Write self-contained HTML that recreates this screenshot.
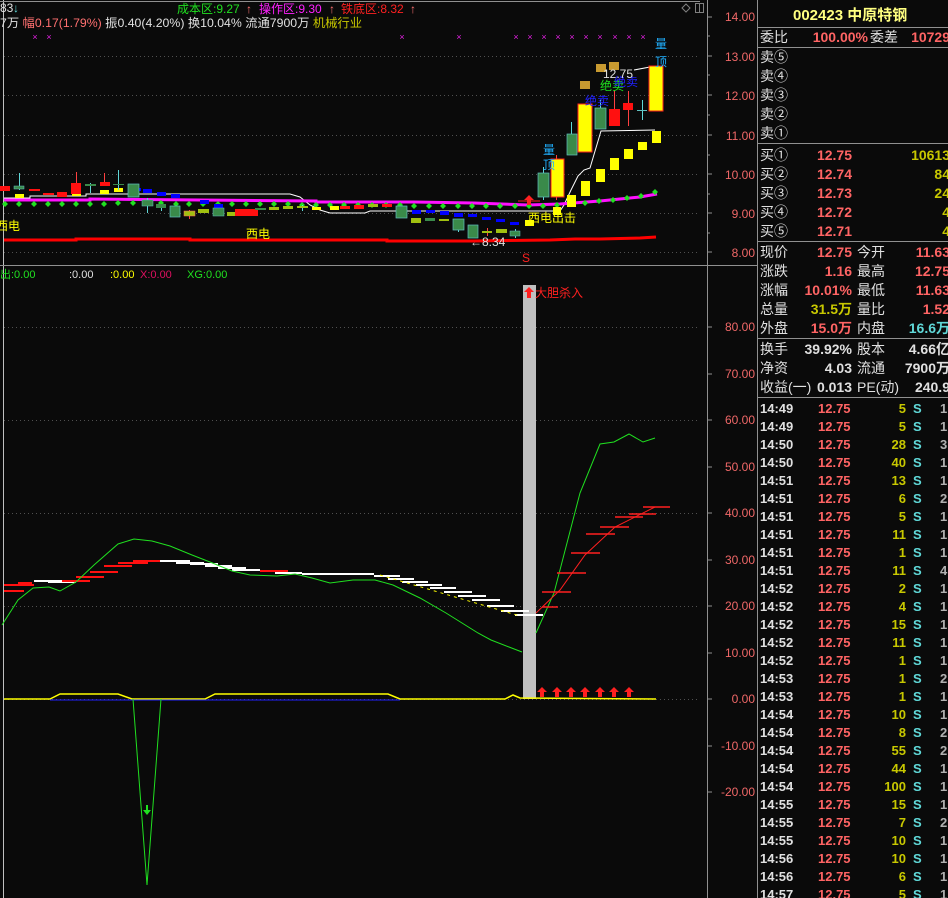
<!DOCTYPE html>
<html><head><meta charset="utf-8"><style>
html,body{margin:0;padding:0;background:#0a0a0a;width:948px;height:898px;overflow:hidden}
svg{display:block}
text{font-family:"Liberation Sans","WenQuanYi Zen Hei","Noto Sans CJK SC",sans-serif}
.ax{fill:#f06868;font-size:12px;text-anchor:end}
.lb{fill:#e0e0e0;font-size:14px}
.v{fill:#ff6464;font-size:14px;text-anchor:end;font-weight:bold}
.y{fill:#c8c800;font-size:14px;text-anchor:end;font-weight:bold}
.tm{fill:#e0e0e0;font-size:13px;font-weight:bold}
.tp{fill:#ff6464;font-size:13px;font-weight:bold}
.tv{fill:#c8c800;font-size:13px;text-anchor:end;font-weight:bold}
.ts{fill:#60d8d8;font-size:13px;font-weight:bold}
.tl{fill:#b0b0b0;font-size:13px;font-weight:bold}
</style></head><body>
<svg width="948" height="898" viewBox="0 0 948 898" xmlns="http://www.w3.org/2000/svg">
<rect width="948" height="898" fill="#0a0a0a"/>
<line x1="3.5" y1="0" x2="3.5" y2="898" stroke="#c0c0c0"/>
<line x1="707.5" y1="0" x2="707.5" y2="898" stroke="#909090"/>
<line x1="757.5" y1="0" x2="757.5" y2="898" stroke="#909090"/>
<line x1="0" y1="1.5" x2="700" y2="1.5" stroke="#909090"/>
<line x1="0" y1="265.5" x2="757" y2="265.5" stroke="#909090"/>
<g stroke="#505050" stroke-dasharray="1,3">
<line x1="4" y1="56.5" x2="700" y2="56.5"/><line x1="4" y1="95.5" x2="700" y2="95.5"/>
<line x1="4" y1="135.5" x2="700" y2="135.5"/><line x1="4" y1="174.5" x2="700" y2="174.5"/>
<line x1="4" y1="213.5" x2="700" y2="213.5"/><line x1="4" y1="252.5" x2="700" y2="252.5"/>
<line x1="4" y1="327.5" x2="700" y2="327.5"/><line x1="4" y1="420.5" x2="700" y2="420.5"/>
<line x1="4" y1="513.5" x2="700" y2="513.5"/><line x1="4" y1="606.5" x2="700" y2="606.5"/>
<line x1="4" y1="699.5" x2="700" y2="699.5"/>
</g>
<g stroke="#909090">
<line x1="707" y1="17" x2="712" y2="17"/><line x1="707" y1="36" x2="710" y2="36"/>
<line x1="707" y1="56" x2="712" y2="56"/><line x1="707" y1="75" x2="710" y2="75"/>
<line x1="707" y1="95" x2="712" y2="95"/><line x1="707" y1="115" x2="710" y2="115"/>
<line x1="707" y1="135" x2="712" y2="135"/><line x1="707" y1="155" x2="710" y2="155"/>
<line x1="707" y1="174" x2="712" y2="174"/><line x1="707" y1="194" x2="710" y2="194"/>
<line x1="707" y1="213" x2="712" y2="213"/><line x1="707" y1="233" x2="710" y2="233"/>
<line x1="707" y1="252" x2="712" y2="252"/>
<line x1="707" y1="327" x2="712" y2="327"/><line x1="707" y1="374" x2="712" y2="374"/>
<line x1="707" y1="420" x2="712" y2="420"/><line x1="707" y1="467" x2="712" y2="467"/>
<line x1="707" y1="513" x2="712" y2="513"/><line x1="707" y1="560" x2="712" y2="560"/>
<line x1="707" y1="606" x2="712" y2="606"/><line x1="707" y1="653" x2="712" y2="653"/>
<line x1="707" y1="699" x2="712" y2="699"/><line x1="707" y1="746" x2="712" y2="746"/>
<line x1="707" y1="792" x2="712" y2="792"/>
</g>
<g class="ax">
<text x="755" y="21">14.00</text><text x="755" y="61">13.00</text><text x="755" y="100">12.00</text>
<text x="755" y="140">11.00</text><text x="755" y="179">10.00</text><text x="755" y="218">9.00</text>
<text x="755" y="257">8.00</text>
<text x="755" y="331">80.00</text><text x="755" y="378">70.00</text><text x="755" y="424">60.00</text>
<text x="755" y="471">50.00</text><text x="755" y="517">40.00</text><text x="755" y="564">30.00</text>
<text x="755" y="610">20.00</text><text x="755" y="657">10.00</text><text x="755" y="703">0.00</text>
<text x="755" y="750">-10.00</text><text x="755" y="796">-20.00</text>
</g>
<path d="M686 4 l4 4 -4 4 -4 -4z" fill="none" stroke="#808080"/>
<rect x="695.5" y="3.5" width="8" height="9" fill="none" stroke="#808080"/><line x1="699.5" y1="4" x2="699.5" y2="12" stroke="#808080"/>

<g font-size="12">
<text x="0" y="12" fill="#e0e0e0">83</text><text x="13" y="12" fill="#60d8d8">↓</text>
<text x="177" y="13" fill="#20e020">成本区:9.27</text><text x="246" y="13" fill="#ff7070">↑</text>
<text x="259" y="13" fill="#ff20ff">操作区:9.30</text><text x="329" y="13" fill="#ff7070">↑</text>
<text x="341" y="13" fill="#ff2020">铁底区:8.32</text><text x="410" y="13" fill="#ff7070">↑</text>
<text x="0" y="27" fill="#e0e0e0" textLength="362" lengthAdjust="spacingAndGlyphs">7万 <tspan fill="#ff7070">幅0.17(1.79%)</tspan> 振0.40(4.20%) 换10.04% 流通7900万 <tspan fill="#c8c800">机械行业</tspan></text>
</g>
<g fill="#e020e0" font-size="9" text-anchor="middle">
<text x="35" y="40">×</text><text x="49" y="40">×</text><text x="402" y="40">×</text><text x="459" y="40">×</text>
<text x="516" y="40">×</text><text x="530" y="40">×</text><text x="544" y="40">×</text><text x="558" y="40">×</text>
<text x="572" y="40">×</text><text x="586" y="40">×</text><text x="600" y="40">×</text><text x="615" y="40">×</text>
<text x="629" y="40">×</text><text x="643" y="40">×</text>
</g>

<polyline points="4,240 76,240 76,239 190,239 190,240 387,240 387,241 474,241 550,240 575,239 600,239 640,238 656,237" fill="none" stroke="#ff0000" stroke-width="3"/>
<polyline points="4,198 30,198 30,196 86,196 86,194 290,194 300,197 310,205 320,210 330,213 365,213 370,211 405,211 474,211 560,211 564,205 571,190 578,176 584,170 590,168 601,131 655,130" fill="none" stroke="#ffffff" stroke-width="1"/>
<polyline points="634,70 650,67 660,66" fill="none" stroke="#ffffff"/>
<polyline points="4,200 90,200 90,199 200,200 316,201 316,202 414,202 474,203 528,205 560,204 600,201 640,197 657,194" fill="none" stroke="#ff10ff" stroke-width="3"/>
<g fill="#20e020">
<path d="M5 201l3 3-3 3-3-3z"/><path d="M19 201l3 3-3 3-3-3z"/><path d="M34 201l3 3-3 3-3-3z"/><path d="M48 201l3 3-3 3-3-3z"/>
<path d="M62 201l3 3-3 3-3-3z"/><path d="M76 201l3 3-3 3-3-3z"/><path d="M90 201l3 3-3 3-3-3z"/><path d="M104 201l3 3-3 3-3-3z"/>
<path d="M118 200l3 3-3 3-3-3z"/><path d="M133 200l3 3-3 3-3-3z"/><path d="M147 200l3 3-3 3-3-3z"/><path d="M161 200l3 3-3 3-3-3z"/>
<path d="M176 201l3 3-3 3-3-3z"/><path d="M189 201l3 3-3 3-3-3z"/><path d="M203 201l3 3-3 3-3-3z"/><path d="M218 201l3 3-3 3-3-3z"/>
<path d="M232 201l3 3-3 3-3-3z"/><path d="M246 201l3 3-3 3-3-3z"/><path d="M260 201l3 3-3 3-3-3z"/><path d="M274 201l3 3-3 3-3-3z"/>
<path d="M288 201l3 3-3 3-3-3z"/><path d="M302 202l3 3-3 3-3-3z"/><path d="M316 202l3 3-3 3-3-3z"/><path d="M330 202l3 3-3 3-3-3z"/>
<path d="M344 202l3 3-3 3-3-3z"/><path d="M358 202l3 3-3 3-3-3z"/><path d="M372 202l3 3-3 3-3-3z"/><path d="M386 202l3 3-3 3-3-3z"/>
<path d="M400 202l3 3-3 3-3-3z"/><path d="M414 203l3 3-3 3-3-3z"/><path d="M429 203l3 3-3 3-3-3z"/><path d="M443 203l3 3-3 3-3-3z"/>
<path d="M458 203l3 3-3 3-3-3z"/><path d="M472 203l3 3-3 3-3-3z"/><path d="M486 203l3 3-3 3-3-3z"/><path d="M500 203l3 3-3 3-3-3z"/>
<path d="M515 203l3 3-3 3-3-3z"/><path d="M529 203l3 3-3 3-3-3z"/><path d="M543 203l3 3-3 3-3-3z"/><path d="M557 202l3 3-3 3-3-3z"/>
<path d="M571 201l3 3-3 3-3-3z"/><path d="M585 200l3 3-3 3-3-3z"/><path d="M599 198l3 3-3 3-3-3z"/><path d="M613 197l3 3-3 3-3-3z"/>
<path d="M627 195l3 3-3 3-3-3z"/><path d="M641 193l3 3-3 3-3-3z"/><path d="M655 189l3 3-3 3-3-3z"/>
</g>
<g fill="#ffff00">
<rect x="15" y="194" width="9" height="4"/><rect x="72" y="192" width="9" height="4"/><rect x="100" y="190" width="9" height="4"/><rect x="114" y="188" width="9" height="4"/>
<rect x="312" y="207" width="9" height="3"/><rect x="330" y="206" width="9" height="4"/>
<rect x="525" y="220" width="9" height="6"/>
<rect x="553" y="207" width="8" height="8"/><rect x="567" y="195" width="9" height="12"/><rect x="581" y="181" width="9" height="15"/>
<rect x="596" y="169" width="9" height="13"/><rect x="610" y="158" width="9" height="12"/><rect x="624" y="149" width="9" height="10"/>
<rect x="638" y="142" width="9" height="8"/><rect x="652" y="131" width="9" height="12"/>
</g>
<g fill="#0000ff">
<rect x="133" y="188" width="8" height="3"/><rect x="143" y="189" width="9" height="4"/><rect x="157" y="192" width="9" height="4"/><rect x="171" y="194" width="9" height="4"/>
<rect x="200" y="200" width="9" height="4"/><rect x="214" y="204" width="9" height="4"/><rect x="398" y="208" width="9" height="3"/>
<rect x="412" y="210" width="9" height="4"/><rect x="426" y="210" width="9" height="3"/><rect x="440" y="211" width="9" height="4"/>
<rect x="454" y="213" width="9" height="4"/><rect x="468" y="214" width="9" height="3"/><rect x="482" y="217" width="9" height="3"/>
<rect x="496" y="219" width="9" height="3"/><rect x="510" y="222" width="9" height="3"/>
</g>
<g stroke-width="1">
<line x1="19.5" y1="173" x2="19.5" y2="190" stroke="#60d8d8"/><line x1="76.5" y1="172" x2="76.5" y2="194" stroke="#ff4040"/>
<line x1="90.5" y1="183" x2="90.5" y2="193" stroke="#60d8d8"/><line x1="104.5" y1="173" x2="104.5" y2="186" stroke="#ff4040"/>
<line x1="118.5" y1="170" x2="118.5" y2="190" stroke="#60d8d8"/><line x1="147.5" y1="198" x2="147.5" y2="213" stroke="#60d8d8"/>
<line x1="161.5" y1="204" x2="161.5" y2="211" stroke="#60d8d8"/><line x1="189.5" y1="210" x2="189.5" y2="219" stroke="#ff4040"/>
<line x1="302.5" y1="205" x2="302.5" y2="211" stroke="#60d8d8"/><line x1="458.5" y1="219" x2="458.5" y2="232" stroke="#60d8d8"/>
<line x1="487.5" y1="228" x2="487.5" y2="236" stroke="#ff4040"/><line x1="515.5" y1="229" x2="515.5" y2="238" stroke="#60d8d8"/>
<line x1="543.5" y1="167" x2="543.5" y2="200" stroke="#60d8d8"/><line x1="571.5" y1="122" x2="571.5" y2="155" stroke="#60d8d8"/>
<line x1="600.5" y1="100" x2="600.5" y2="129" stroke="#60d8d8"/><line x1="614.5" y1="90" x2="614.5" y2="126" stroke="#ff4040"/>
<line x1="628.5" y1="91" x2="628.5" y2="126" stroke="#ff4040"/><line x1="642.5" y1="100" x2="642.5" y2="120" stroke="#60d8d8"/>
<line x1="556.5" y1="155" x2="556.5" y2="200" stroke="#ff4040"/>
</g>
<g>
<rect x="0" y="186" width="10" height="5" fill="#ff1010"/>
<rect x="14" y="186" width="10" height="3" fill="#3a8a4a" stroke="#60c0c0" stroke-width=".5"/>
<rect x="29" y="189" width="11" height="2" fill="#ff1010"/>
<rect x="43" y="193" width="11" height="2" fill="#ff1010"/>
<rect x="57" y="192" width="10" height="5" fill="#ff1010"/>
<rect x="71" y="183" width="10" height="11" fill="#ff1010"/>
<rect x="85" y="184" width="11" height="2" fill="#3a8a4a"/>
<rect x="100" y="182" width="10" height="4" fill="#ff1010"/>
<rect x="113" y="184" width="11" height="1" fill="#3a8a4a"/>
<rect x="128" y="184" width="11" height="13" fill="#3a8a4a" stroke="#60c0c0" stroke-width=".7"/>
<rect x="142" y="200" width="11" height="6" fill="#3a8a4a" stroke="#60c0c0" stroke-width=".5"/>
<rect x="156" y="204" width="10" height="4" fill="#3a8a4a"/>
<rect x="170" y="206" width="10" height="11" fill="#3a8a4a" stroke="#60c0c0" stroke-width=".7"/>
<rect x="184" y="211" width="11" height="5" fill="#a0c010" stroke="#ff6060" stroke-width=".5"/>
<rect x="198" y="209" width="11" height="4" fill="#a0c010"/>
<rect x="213" y="208" width="11" height="8" fill="#3a8a4a" stroke="#60c0c0" stroke-width=".5"/>
<rect x="227" y="212" width="10" height="4" fill="#a0c010"/>
<rect x="235" y="209" width="23" height="7" fill="#ff1010"/>
<rect x="255" y="208" width="11" height="2" fill="#3a8a4a"/>
<rect x="269" y="207" width="10" height="3" fill="#a0c010"/>
<rect x="283" y="206" width="10" height="3" fill="#a0c010"/>
<rect x="297" y="206" width="11" height="2" fill="#a0c010"/>
<rect x="340" y="206" width="10" height="3" fill="#ff1010"/>
<rect x="354" y="205" width="10" height="4" fill="#ff1010"/>
<rect x="368" y="204" width="10" height="3" fill="#a0c010"/>
<rect x="382" y="204" width="10" height="3" fill="#ff1010"/>
<rect x="396" y="206" width="11" height="12" fill="#3a8a4a" stroke="#60c0c0" stroke-width=".7"/>
<rect x="411" y="218" width="10" height="5" fill="#a0c010"/>
<rect x="425" y="218" width="10" height="3" fill="#3a8a4a"/>
<rect x="439" y="219" width="10" height="2" fill="#a0c010"/>
<rect x="453" y="219" width="11" height="11" fill="#3a8a4a" stroke="#60c0c0" stroke-width=".7"/>
<rect x="468" y="225" width="10" height="13" fill="#3a8a4a" stroke="#60c0c0" stroke-width=".7"/>
<rect x="482" y="231" width="10" height="2" fill="#a0c010"/>
<rect x="496" y="229" width="11" height="4" fill="#a0c010"/>
<rect x="510" y="231" width="10" height="5" fill="#3a8a4a" stroke="#60c0c0" stroke-width=".5"/>
<rect x="538" y="173" width="11" height="24" fill="#3a8a4a" stroke="#60c0c0" stroke-width=".7"/>
<rect x="551" y="159" width="13" height="38" fill="#ffff00" stroke="#ff2020" stroke-width="1"/>
<rect x="567" y="134" width="10" height="21" fill="#3a8a4a" stroke="#60c0c0" stroke-width=".7"/>
<rect x="578" y="104" width="14" height="48" fill="#ffff00" stroke="#ff2020" stroke-width="1"/>
<rect x="595" y="108" width="11" height="21" fill="#3a8a4a" stroke="#60c0c0" stroke-width=".7"/>
<rect x="609" y="109" width="11" height="17" fill="#ff1010"/>
<rect x="623" y="103" width="10" height="7" fill="#ff1010"/>
<rect x="637" y="110" width="10" height="1" fill="#60c0c0"/>
<rect x="649" y="66" width="14" height="45" fill="#ffff00" stroke="#ff2020" stroke-width="1"/>
</g>
<rect x="596" y="64" width="10" height="8" fill="#c89a30"/><rect x="609" y="62" width="10" height="8" fill="#c89a30"/><rect x="580" y="81" width="10" height="8" fill="#c89a30"/>
<g font-size="12">
<text x="-4" y="230" fill="#ffff00">西电</text>
<text x="246" y="238" fill="#ffff00">西电</text>
<text x="528" y="222" fill="#ffff00">西电出击</text>
<text x="543" y="154" fill="#20b0ff">量</text><text x="543" y="169" fill="#20b0ff">顶</text>
<text x="655" y="48" fill="#20b0ff">量</text><text x="655" y="66" fill="#20b0ff">顶</text>
<text x="600" y="90" fill="#20e020">绝卖</text><text x="614" y="86" fill="#2020ff">绝卖</text><text x="585" y="105" fill="#2020ff">绝卖</text>
<text x="603" y="78" fill="#e0e0e0">12.75</text>
<text x="470" y="246" fill="#e0e0e0">←8.34</text>
<text x="522" y="262" fill="#ff2020">S</text>
</g>
<path d="M529 195 l5 5 h-3 v5 h-4 v-5 h-3z" fill="#ff2020"/>
<line x1="518" y1="201" x2="540" y2="201" stroke="#ff2020"/>

<g font-size="11">
<text x="0" y="278" fill="#20e020">出:0.00</text>
<text x="69" y="278" fill="#e0e0e0">:0.00</text>
<text x="110" y="278" fill="#ffff00">:0.00</text>
<text x="140" y="278" fill="#e01060">X:0.00</text>
<text x="187" y="278" fill="#20e020">XG:0.00</text>
</g>
<rect x="523" y="285" width="13" height="414" fill="#c0c0c0"/>
<path d="M529 287 l5 5 h-3 v6 h-4 v-6 h-3z" fill="#ff2020"/>
<text x="535" y="297" font-size="12" fill="#ff2020">大胆杀入</text>
<g stroke-width="2">
<line x1="4" y1="591" x2="24" y2="591" stroke="#ff1010"/><line x1="4" y1="585" x2="34" y2="585" stroke="#ff1010"/>
<line x1="18" y1="583" x2="32" y2="583" stroke="#ff1010"/><line x1="34" y1="581" x2="62" y2="581" stroke="#ffffff"/>
<line x1="48" y1="582" x2="76" y2="582" stroke="#ffffff"/><line x1="62" y1="581" x2="90" y2="581" stroke="#ff1010"/>
<line x1="76" y1="577" x2="104" y2="577" stroke="#ff1010"/><line x1="90" y1="572" x2="118" y2="572" stroke="#ff1010"/>
<line x1="104" y1="566" x2="132" y2="566" stroke="#ff1010"/><line x1="118" y1="563" x2="148" y2="563" stroke="#ff1010"/>
<line x1="133" y1="561" x2="160" y2="561" stroke="#ff1010"/><line x1="160" y1="561" x2="190" y2="561" stroke="#ffffff"/>
<line x1="176" y1="563" x2="204" y2="563" stroke="#ffffff"/><line x1="190" y1="564" x2="218" y2="564" stroke="#ffffff"/>
<line x1="205" y1="566" x2="232" y2="566" stroke="#ffffff"/><line x1="218" y1="568" x2="246" y2="568" stroke="#ffffff"/>
<line x1="232" y1="570" x2="260" y2="570" stroke="#ffffff"/><line x1="260" y1="571" x2="288" y2="571" stroke="#ff1010"/>
<line x1="275" y1="573" x2="302" y2="573" stroke="#ffffff"/><line x1="302" y1="574" x2="330" y2="574" stroke="#ffffff"/>
<line x1="330" y1="574" x2="374" y2="574" stroke="#ffffff"/><line x1="374" y1="576" x2="400" y2="576" stroke="#ffffff"/>
<line x1="388" y1="579" x2="414" y2="579" stroke="#ffffff"/><line x1="402" y1="582" x2="428" y2="582" stroke="#ffffff"/>
<line x1="416" y1="585" x2="442" y2="585" stroke="#ffffff"/><line x1="430" y1="588" x2="456" y2="588" stroke="#ffffff"/>
<line x1="444" y1="592" x2="472" y2="592" stroke="#ffffff"/><line x1="458" y1="596" x2="486" y2="596" stroke="#ffffff"/>
<line x1="472" y1="600" x2="500" y2="600" stroke="#ffffff"/><line x1="487" y1="606" x2="514" y2="606" stroke="#ffffff"/>
<line x1="501" y1="611" x2="529" y2="611" stroke="#ffffff"/><line x1="515" y1="615" x2="543" y2="615" stroke="#ffffff"/>
</g>
<polyline points="380,575 520,616" fill="none" stroke="#ffff00" stroke-width="1" stroke-dasharray="3,4"/>
<polyline points="2,625 18,600 33,588 49,587 60,591 76,582 94,565 118,544 134,539 152,541 170,546 192,555 210,562 232,571 250,575 277,576 295,574 312,578 330,583 353,580 375,580 393,585 420,598 446,613 478,633 491,640 509,647 522,652" fill="none" stroke="#20e020"/>
<polyline points="536,633 554,593 580,493 600,444 614,442 629,434 643,442 655,438" fill="none" stroke="#20e020"/>
<polyline points="536,613 560,590 585,555 615,527 655,507" fill="none" stroke="#ff2020"/>
<g stroke="#ff2020" stroke-width="1.5">
<line x1="542" y1="607" x2="558" y2="607"/><line x1="542" y1="592" x2="571" y2="592"/>
<line x1="557" y1="573" x2="586" y2="573"/><line x1="571" y1="553" x2="600" y2="553"/>
<line x1="586" y1="534" x2="615" y2="534"/><line x1="600" y1="527" x2="629" y2="527"/>
<line x1="615" y1="517" x2="643" y2="517"/><line x1="629" y1="514" x2="656" y2="514"/>
<line x1="643" y1="507" x2="670" y2="507"/>
</g>
<polyline points="4,699 50,699 60,694 118,694 132,699 205,699 215,694 388,694 400,699 505,699 513,695 520,698 656,699" fill="none" stroke="#ffff00" stroke-width="1.5"/>
<line x1="50" y1="700" x2="400" y2="700" stroke="#2020ff"/>
<polyline points="133,699 147,885 161,699" fill="none" stroke="#20e020"/>
<path d="M147 815 l-4 -5 h3 v-5 h2 v5 h3z" fill="#20e020"/>
<g fill="#ff2020">
<path d="M542 687 l5 5 h-3 v5 h-4 v-5 h-3z"/><path d="M557 687 l5 5 h-3 v5 h-4 v-5 h-3z"/>
<path d="M571 687 l5 5 h-3 v5 h-4 v-5 h-3z"/><path d="M585 687 l5 5 h-3 v5 h-4 v-5 h-3z"/>
<path d="M600 687 l5 5 h-3 v5 h-4 v-5 h-3z"/><path d="M614 687 l5 5 h-3 v5 h-4 v-5 h-3z"/>
<path d="M629 687 l5 5 h-3 v5 h-4 v-5 h-3z"/>
</g>

<g stroke="#909090">
<line x1="757" y1="27.5" x2="948" y2="27.5"/><line x1="757" y1="47.5" x2="948" y2="47.5"/>
<line x1="757" y1="143.5" x2="948" y2="143.5"/><line x1="757" y1="241.5" x2="948" y2="241.5"/>
<line x1="757" y1="338.5" x2="948" y2="338.5"/><line x1="757" y1="397.5" x2="948" y2="397.5"/>
</g>
<text x="793" y="20" font-size="15" font-weight="bold" fill="#ffff80">002423 中原特钢</text>
<text x="760" y="42" class="lb">委比</text><text x="868" y="42" class="v">100.00%</text><text x="870" y="42" class="lb">委差</text><text x="950" y="42" class="v">10729</text>
<text x="760" y="62" class="lb">卖⑤</text><text x="760" y="81" class="lb">卖④</text><text x="760" y="100" class="lb">卖③</text>
<text x="760" y="119" class="lb">卖②</text><text x="760" y="138" class="lb">卖①</text>
<text x="760" y="160" class="lb">买①</text><text x="852" y="160" class="v">12.75</text><text x="950" y="160" class="y">10613</text>
<text x="760" y="179" class="lb">买②</text><text x="852" y="179" class="v">12.74</text><text x="950" y="179" class="y">84</text>
<text x="760" y="198" class="lb">买③</text><text x="852" y="198" class="v">12.73</text><text x="950" y="198" class="y">24</text>
<text x="760" y="217" class="lb">买④</text><text x="852" y="217" class="v">12.72</text><text x="950" y="217" class="y">4</text>
<text x="760" y="236" class="lb">买⑤</text><text x="852" y="236" class="v">12.71</text><text x="950" y="236" class="y">4</text>
<text x="760" y="257" class="lb">现价</text><text x="852" y="257" class="v">12.75</text><text x="857" y="257" class="lb">今开</text><text x="950" y="257" class="v">11.63</text>
<text x="760" y="276" class="lb">涨跌</text><text x="852" y="276" class="v">1.16</text><text x="857" y="276" class="lb">最高</text><text x="950" y="276" class="v">12.75</text>
<text x="760" y="295" class="lb">涨幅</text><text x="852" y="295" class="v">10.01%</text><text x="857" y="295" class="lb">最低</text><text x="950" y="295" class="v">11.63</text>
<text x="760" y="314" class="lb">总量</text><text x="852" y="314" class="y">31.5万</text><text x="857" y="314" class="lb">量比</text><text x="950" y="314" class="v">1.52</text>
<text x="760" y="333" class="lb">外盘</text><text x="852" y="333" class="v">15.0万</text><text x="857" y="333" class="lb">内盘</text><text x="950" y="333" class="v" style="fill:#60d8d8">16.6万</text>
<text x="760" y="354" class="lb">换手</text><text x="852" y="354" class="v" style="fill:#e0e0e0">39.92%</text><text x="857" y="354" class="lb">股本</text><text x="950" y="354" class="v" style="fill:#e0e0e0">4.66亿</text>
<text x="760" y="373" class="lb">净资</text><text x="852" y="373" class="v" style="fill:#e0e0e0">4.03</text><text x="857" y="373" class="lb">流通</text><text x="950" y="373" class="v" style="fill:#e0e0e0">7900万</text>
<text x="760" y="392" class="lb">收益(一)</text><text x="852" y="392" class="v" style="fill:#e0e0e0">0.013</text><text x="857" y="392" class="lb">PE(动)</text><text x="950" y="392" class="v" style="fill:#e0e0e0">240.9</text>

<g>
<text x="760" y="413" class="tm">14:49</text><text x="818" y="413" class="tp">12.75</text><text x="906" y="413" class="tv">5</text><text x="913" y="413" class="ts">S</text><text x="940" y="413" class="tl">1</text>
<text x="760" y="431" class="tm">14:49</text><text x="818" y="431" class="tp">12.75</text><text x="906" y="431" class="tv">5</text><text x="913" y="431" class="ts">S</text><text x="940" y="431" class="tl">1</text>
<text x="760" y="449" class="tm">14:50</text><text x="818" y="449" class="tp">12.75</text><text x="906" y="449" class="tv">28</text><text x="913" y="449" class="ts">S</text><text x="940" y="449" class="tl">3</text>
<text x="760" y="467" class="tm">14:50</text><text x="818" y="467" class="tp">12.75</text><text x="906" y="467" class="tv">40</text><text x="913" y="467" class="ts">S</text><text x="940" y="467" class="tl">1</text>
<text x="760" y="485" class="tm">14:51</text><text x="818" y="485" class="tp">12.75</text><text x="906" y="485" class="tv">13</text><text x="913" y="485" class="ts">S</text><text x="940" y="485" class="tl">1</text>
<text x="760" y="503" class="tm">14:51</text><text x="818" y="503" class="tp">12.75</text><text x="906" y="503" class="tv">6</text><text x="913" y="503" class="ts">S</text><text x="940" y="503" class="tl">2</text>
<text x="760" y="521" class="tm">14:51</text><text x="818" y="521" class="tp">12.75</text><text x="906" y="521" class="tv">5</text><text x="913" y="521" class="ts">S</text><text x="940" y="521" class="tl">1</text>
<text x="760" y="539" class="tm">14:51</text><text x="818" y="539" class="tp">12.75</text><text x="906" y="539" class="tv">11</text><text x="913" y="539" class="ts">S</text><text x="940" y="539" class="tl">1</text>
<text x="760" y="557" class="tm">14:51</text><text x="818" y="557" class="tp">12.75</text><text x="906" y="557" class="tv">1</text><text x="913" y="557" class="ts">S</text><text x="940" y="557" class="tl">1</text>
<text x="760" y="575" class="tm">14:51</text><text x="818" y="575" class="tp">12.75</text><text x="906" y="575" class="tv">11</text><text x="913" y="575" class="ts">S</text><text x="940" y="575" class="tl">4</text>
<text x="760" y="593" class="tm">14:52</text><text x="818" y="593" class="tp">12.75</text><text x="906" y="593" class="tv">2</text><text x="913" y="593" class="ts">S</text><text x="940" y="593" class="tl">1</text>
<text x="760" y="611" class="tm">14:52</text><text x="818" y="611" class="tp">12.75</text><text x="906" y="611" class="tv">4</text><text x="913" y="611" class="ts">S</text><text x="940" y="611" class="tl">1</text>
<text x="760" y="629" class="tm">14:52</text><text x="818" y="629" class="tp">12.75</text><text x="906" y="629" class="tv">15</text><text x="913" y="629" class="ts">S</text><text x="940" y="629" class="tl">1</text>
<text x="760" y="647" class="tm">14:52</text><text x="818" y="647" class="tp">12.75</text><text x="906" y="647" class="tv">11</text><text x="913" y="647" class="ts">S</text><text x="940" y="647" class="tl">1</text>
<text x="760" y="665" class="tm">14:52</text><text x="818" y="665" class="tp">12.75</text><text x="906" y="665" class="tv">1</text><text x="913" y="665" class="ts">S</text><text x="940" y="665" class="tl">1</text>
<text x="760" y="683" class="tm">14:53</text><text x="818" y="683" class="tp">12.75</text><text x="906" y="683" class="tv">1</text><text x="913" y="683" class="ts">S</text><text x="940" y="683" class="tl">2</text>
<text x="760" y="701" class="tm">14:53</text><text x="818" y="701" class="tp">12.75</text><text x="906" y="701" class="tv">1</text><text x="913" y="701" class="ts">S</text><text x="940" y="701" class="tl">1</text>
<text x="760" y="719" class="tm">14:54</text><text x="818" y="719" class="tp">12.75</text><text x="906" y="719" class="tv">10</text><text x="913" y="719" class="ts">S</text><text x="940" y="719" class="tl">1</text>
<text x="760" y="737" class="tm">14:54</text><text x="818" y="737" class="tp">12.75</text><text x="906" y="737" class="tv">8</text><text x="913" y="737" class="ts">S</text><text x="940" y="737" class="tl">2</text>
<text x="760" y="755" class="tm">14:54</text><text x="818" y="755" class="tp">12.75</text><text x="906" y="755" class="tv">55</text><text x="913" y="755" class="ts">S</text><text x="940" y="755" class="tl">2</text>
<text x="760" y="773" class="tm">14:54</text><text x="818" y="773" class="tp">12.75</text><text x="906" y="773" class="tv">44</text><text x="913" y="773" class="ts">S</text><text x="940" y="773" class="tl">1</text>
<text x="760" y="791" class="tm">14:54</text><text x="818" y="791" class="tp">12.75</text><text x="906" y="791" class="tv">100</text><text x="913" y="791" class="ts">S</text><text x="940" y="791" class="tl">1</text>
<text x="760" y="809" class="tm">14:55</text><text x="818" y="809" class="tp">12.75</text><text x="906" y="809" class="tv">15</text><text x="913" y="809" class="ts">S</text><text x="940" y="809" class="tl">1</text>
<text x="760" y="827" class="tm">14:55</text><text x="818" y="827" class="tp">12.75</text><text x="906" y="827" class="tv">7</text><text x="913" y="827" class="ts">S</text><text x="940" y="827" class="tl">2</text>
<text x="760" y="845" class="tm">14:55</text><text x="818" y="845" class="tp">12.75</text><text x="906" y="845" class="tv">10</text><text x="913" y="845" class="ts">S</text><text x="940" y="845" class="tl">1</text>
<text x="760" y="863" class="tm">14:56</text><text x="818" y="863" class="tp">12.75</text><text x="906" y="863" class="tv">10</text><text x="913" y="863" class="ts">S</text><text x="940" y="863" class="tl">1</text>
<text x="760" y="881" class="tm">14:56</text><text x="818" y="881" class="tp">12.75</text><text x="906" y="881" class="tv">6</text><text x="913" y="881" class="ts">S</text><text x="940" y="881" class="tl">1</text>
<text x="760" y="899" class="tm">14:57</text><text x="818" y="899" class="tp">12.75</text><text x="906" y="899" class="tv">5</text><text x="913" y="899" class="ts">S</text><text x="940" y="899" class="tl">1</text>
</g>
</svg>
</body></html>
